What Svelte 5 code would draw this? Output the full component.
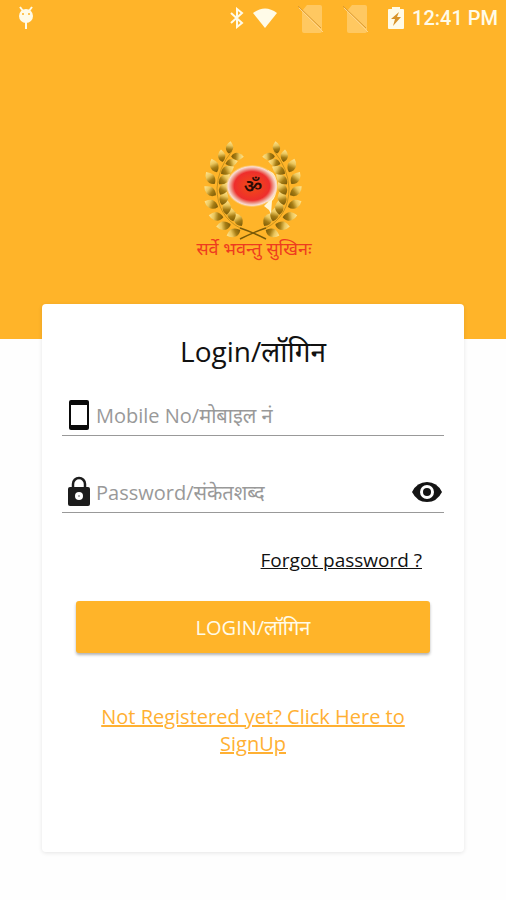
<script>
	let mobile = '';
	let password = '';
	let showPassword = false;

	// leaves of the wreath, placed in pairs along the left stem
	const leaves = [];
	for (let i = 0; i < 9; i++) {
		const deg = 110 + i * 15;
		const rad = (deg * Math.PI) / 180;
		leaves.push({
			x: Math.round(63 + 36 * Math.cos(rad)),
			y: Math.round(52 + 43 * Math.sin(rad)),
			angle: deg + 90,
			size: i > 6 ? 0.9 : 1.05
		});
	}

	function login() {
		if (!mobile || !password) return;
		console.log('login', mobile);
	}
</script>

<div class="screen">
	<header>
		<div class="status-bar">
			<svg class="debug" width="18" height="24" viewBox="0 0 18 24">
				<path d="M3 1l3 4M15 1l-3 4M9 15v8" stroke="#fffbe8" stroke-width="2" fill="none" />
				<circle cx="9" cy="10" r="7" fill="#fffbe8" />
				<circle cx="6" cy="8" r="1" fill="#ffb429" />
				<circle cx="12" cy="8" r="1" fill="#ffb429" />
			</svg>
			<div class="status-icons">
				<svg width="16" height="22" viewBox="0 0 16 22">
					<path d="M2 6l11 10-5 4V2l5 4L2 16" stroke="#fffbe8" stroke-width="2" fill="none" />
				</svg>
				<svg class="wifi" width="26" height="20" viewBox="0 0 26 20">
					<path d="M1 5Q13-4 25 5L13 20z" fill="#fffbe8" />
				</svg>
				{#each [1, 2] as sim (sim)}
					<svg class="sim" width="27" height="32" viewBox="0 0 27 32">
						<path d="M9 3h13q2 0 2 2v24q0 2-2 2H6q-2 0-2-2V9z" fill="#ffc861" />
						<path d="M1 6l24 24" stroke="#ffd58a" stroke-width="1" />
						<path d="M0 4l23 22" stroke="#d99a33" stroke-width="1" />
					</svg>
				{/each}
				<svg class="battery" width="16" height="24" viewBox="0 0 16 24">
					<path d="M4 3V1h8v2h3q1 0 1 1v18q0 1-1 1H1q-1 0-1-1V4q0-1 1-1z" fill="#fffbe8" />
					<path d="M11 6L3 13h4l-2 7 8-9H9z" fill="#d8932a" />
				</svg>
				<span>12:41 PM</span>
			</div>
		</div>
		<svg class="logo" width="130" height="130" viewBox="-2 0 130 130">
			<defs>
				<linearGradient id="leaf" x1="0" y1="0" x2="1" y2="0">
					<stop offset="0" stop-color="#7a5a08" />
					<stop offset="0.35" stop-color="#a57c14" />
					<stop offset="0.65" stop-color="#ecc75c" />
					<stop offset="1" stop-color="#ffe694" />
				</linearGradient>
				<radialGradient id="sun">
					<stop offset="0" stop-color="#ee4a1c" />
					<stop offset="0.3" stop-color="#f0401f" />
					<stop offset="0.68" stop-color="#ee2e2c" />
					<stop offset="0.82" stop-color="#ee9a8c" />
					<stop offset="0.92" stop-color="#f9dcd4" />
					<stop offset="1" stop-color="#ffd27c" stop-opacity="0.3" />
				</radialGradient>
				<g id="branch">
					<path d="M76 103Q62 96 50 92" fill="none" stroke="#7a5a08" stroke-width="1.5" />
					<path d="M50 92Q27 80 27 52Q28 32 42 15" fill="none" stroke="#b98a1c" stroke-width="0.8" />
					{#each leaves as leaf}
						<g transform="translate({leaf.x} {leaf.y}) rotate({leaf.angle}) scale({leaf.size})">
							<path d="M0 0Q3-5 8-4Q12-3 14 0Q11 3 8 4Q3 4 0 0z" transform="translate(0 2) rotate(42)" fill="url(#leaf)" />
							<path d="M0 0Q3-5 8-4Q12-3 14 0Q11 3 8 4Q3 4 0 0z" transform="translate(0 -2) rotate(-42)" fill="url(#leaf)" />
						</g>
					{/each}
				</g>
			</defs>
			<use href="#branch" />
			<use href="#branch" transform="translate(126 0) scale(-1 1)" />
			<path d="M78 34Q88 38 87 51Q86 61 82 65L81 78L79 74L74 70L78 66L70 63z" fill="#fff6d8" />
			<ellipse cx="62" cy="50" rx="26" ry="21" fill="url(#sun)" />
			<text class="om" x="63" y="57">ॐ</text>
			<text class="motto" x="64" y="119">सर्वे भवन्तु सुखिनः</text>
		</svg>
	</header>

	<main class="card">
		<h1>Login/लॉगिन</h1>
		<form on:submit|preventDefault={login}>
			<div class="field">
				<label for="mobile" aria-label="Mobile No">
					<svg width="34" height="34" viewBox="0 0 34 34">
						<rect x="7" y="1" width="20" height="30" rx="2" fill="#0a0a0a" />
						<rect x="9" y="6" width="16" height="20" fill="#fff" />
					</svg>
				</label>
				<input id="mobile" type="tel" placeholder="Mobile No/मोबाइल नं" bind:value={mobile} />
			</div>
			<div class="field">
				<label for="password" aria-label="Password">
					<svg width="34" height="34" viewBox="0 0 34 34">
						<path d="M11 12V8a6 6 0 0 1 12 0v4" fill="none" stroke="#1c1c1c" stroke-width="2.5" />
						<rect x="6" y="11" width="22" height="19" rx="2" fill="#1c1c1c" />
						<circle cx="17" cy="20" r="4" fill="#fff" />
						<circle cx="17" cy="20" r="1" fill="#999" />
					</svg>
				</label>
				<input
					id="password"
					type={showPassword ? 'text' : 'password'}
					placeholder="Password/संकेतशब्द"
					bind:value={password}
				/>
				<button
					type="button"
					class="eye"
					aria-label="Show password"
					on:click={() => (showPassword = !showPassword)}
				>
					<svg width="34" height="34" viewBox="0 0 34 34">
						<path d="M2 16Q7 6 17 6T32 16Q27 26 17 26T2 16z" fill="#141414" />
						<circle cx="17" cy="16" r="7" fill="#fff" />
						<circle cx="17" cy="16" r="4" fill="#141414" />
					</svg>
				</button>
			</div>
			<a class="forgot" href="#forgot">Forgot password ?</a>
			<button type="submit" class="login">LOGIN/लॉगिन</button>
		</form>
		<a class="signup" href="#signup">Not Registered yet? Click Here to SignUp</a>
	</main>
</div>

<style>
	:global(body) {
		margin: 0;
		background: #fefefe;
	}

	.screen {
		font-family: 'Open Sans', 'Noto Sans', 'Noto Sans Devanagari', sans-serif;
		padding-bottom: 48px;
	}

	header {
		display: flex;
		flex-direction: column;
		align-items: center;
		background: #ffb429;
		padding-bottom: 73px;
	}

	.status-bar {
		display: flex;
		align-items: center;
		justify-content: space-between;
		width: 100%;
		height: 36px;
		box-sizing: border-box;
		padding: 0 8px 0 17px;
		margin-bottom: 100px;
	}

	.status-icons {
		display: flex;
		align-items: center;
		color: #fffbe8;
		font: 500 20px/36px Roboto, sans-serif;
	}

	.wifi {
		margin: 0 20px 0 7px;
	}

	.sim {
		margin-right: 18px;
	}

	.battery {
		margin-right: 8px;
	}

	.logo {
		display: block;
	}

	.om {
		font-size: 19px;
		font-weight: 600;
		text-anchor: middle;
		fill: #2b0a06;
	}

	.motto {
		font-size: 18px;
		text-anchor: middle;
		fill: #ee3b1f;
	}

	.card {
		position: relative;
		margin: -35px 42px 0;
		padding: 27px 20px 95px;
		background: #fff;
		border-radius: 4px;
		box-shadow: 0 1px 4px rgba(0, 0, 0, 0.1);
	}

	h1 {
		margin: 0 0 25px;
		font-size: 28px;
		font-weight: 400;
		line-height: 40px;
		text-align: center;
		color: #111;
	}

	form {
		display: flex;
		flex-direction: column;
	}

	.field {
		display: flex;
		align-items: center;
		height: 39px;
		margin-bottom: 37px;
		border-bottom: 1px solid #999;
	}

	.field svg {
		display: block;
	}

	input {
		flex: 1;
		min-width: 0;
		padding: 0;
		border: 0;
		outline: none;
		background: none;
		font: inherit;
		font-size: 20px;
		color: #222;
	}

	input::placeholder {
		color: #999;
		opacity: 1;
	}

	.eye {
		padding: 0;
		border: 0;
		background: none;
		cursor: pointer;
	}

	.forgot {
		align-self: flex-end;
		margin: -4px 22px 27px 0;
		font-size: 19px;
		line-height: 28px;
		color: #111;
	}

	.login {
		height: 52px;
		margin: 0 14px;
		border: 0;
		border-radius: 3px;
		background: #ffb429;
		box-shadow: 0 2px 3px rgba(0, 0, 0, 0.3);
		font: inherit;
		font-size: 20px;
		color: #fffbe8;
		cursor: pointer;
	}

	.signup {
		display: block;
		margin: 50px 36px 0;
		font-size: 20px;
		line-height: 27px;
		text-align: center;
		color: #ffb033;
	}
</style>
